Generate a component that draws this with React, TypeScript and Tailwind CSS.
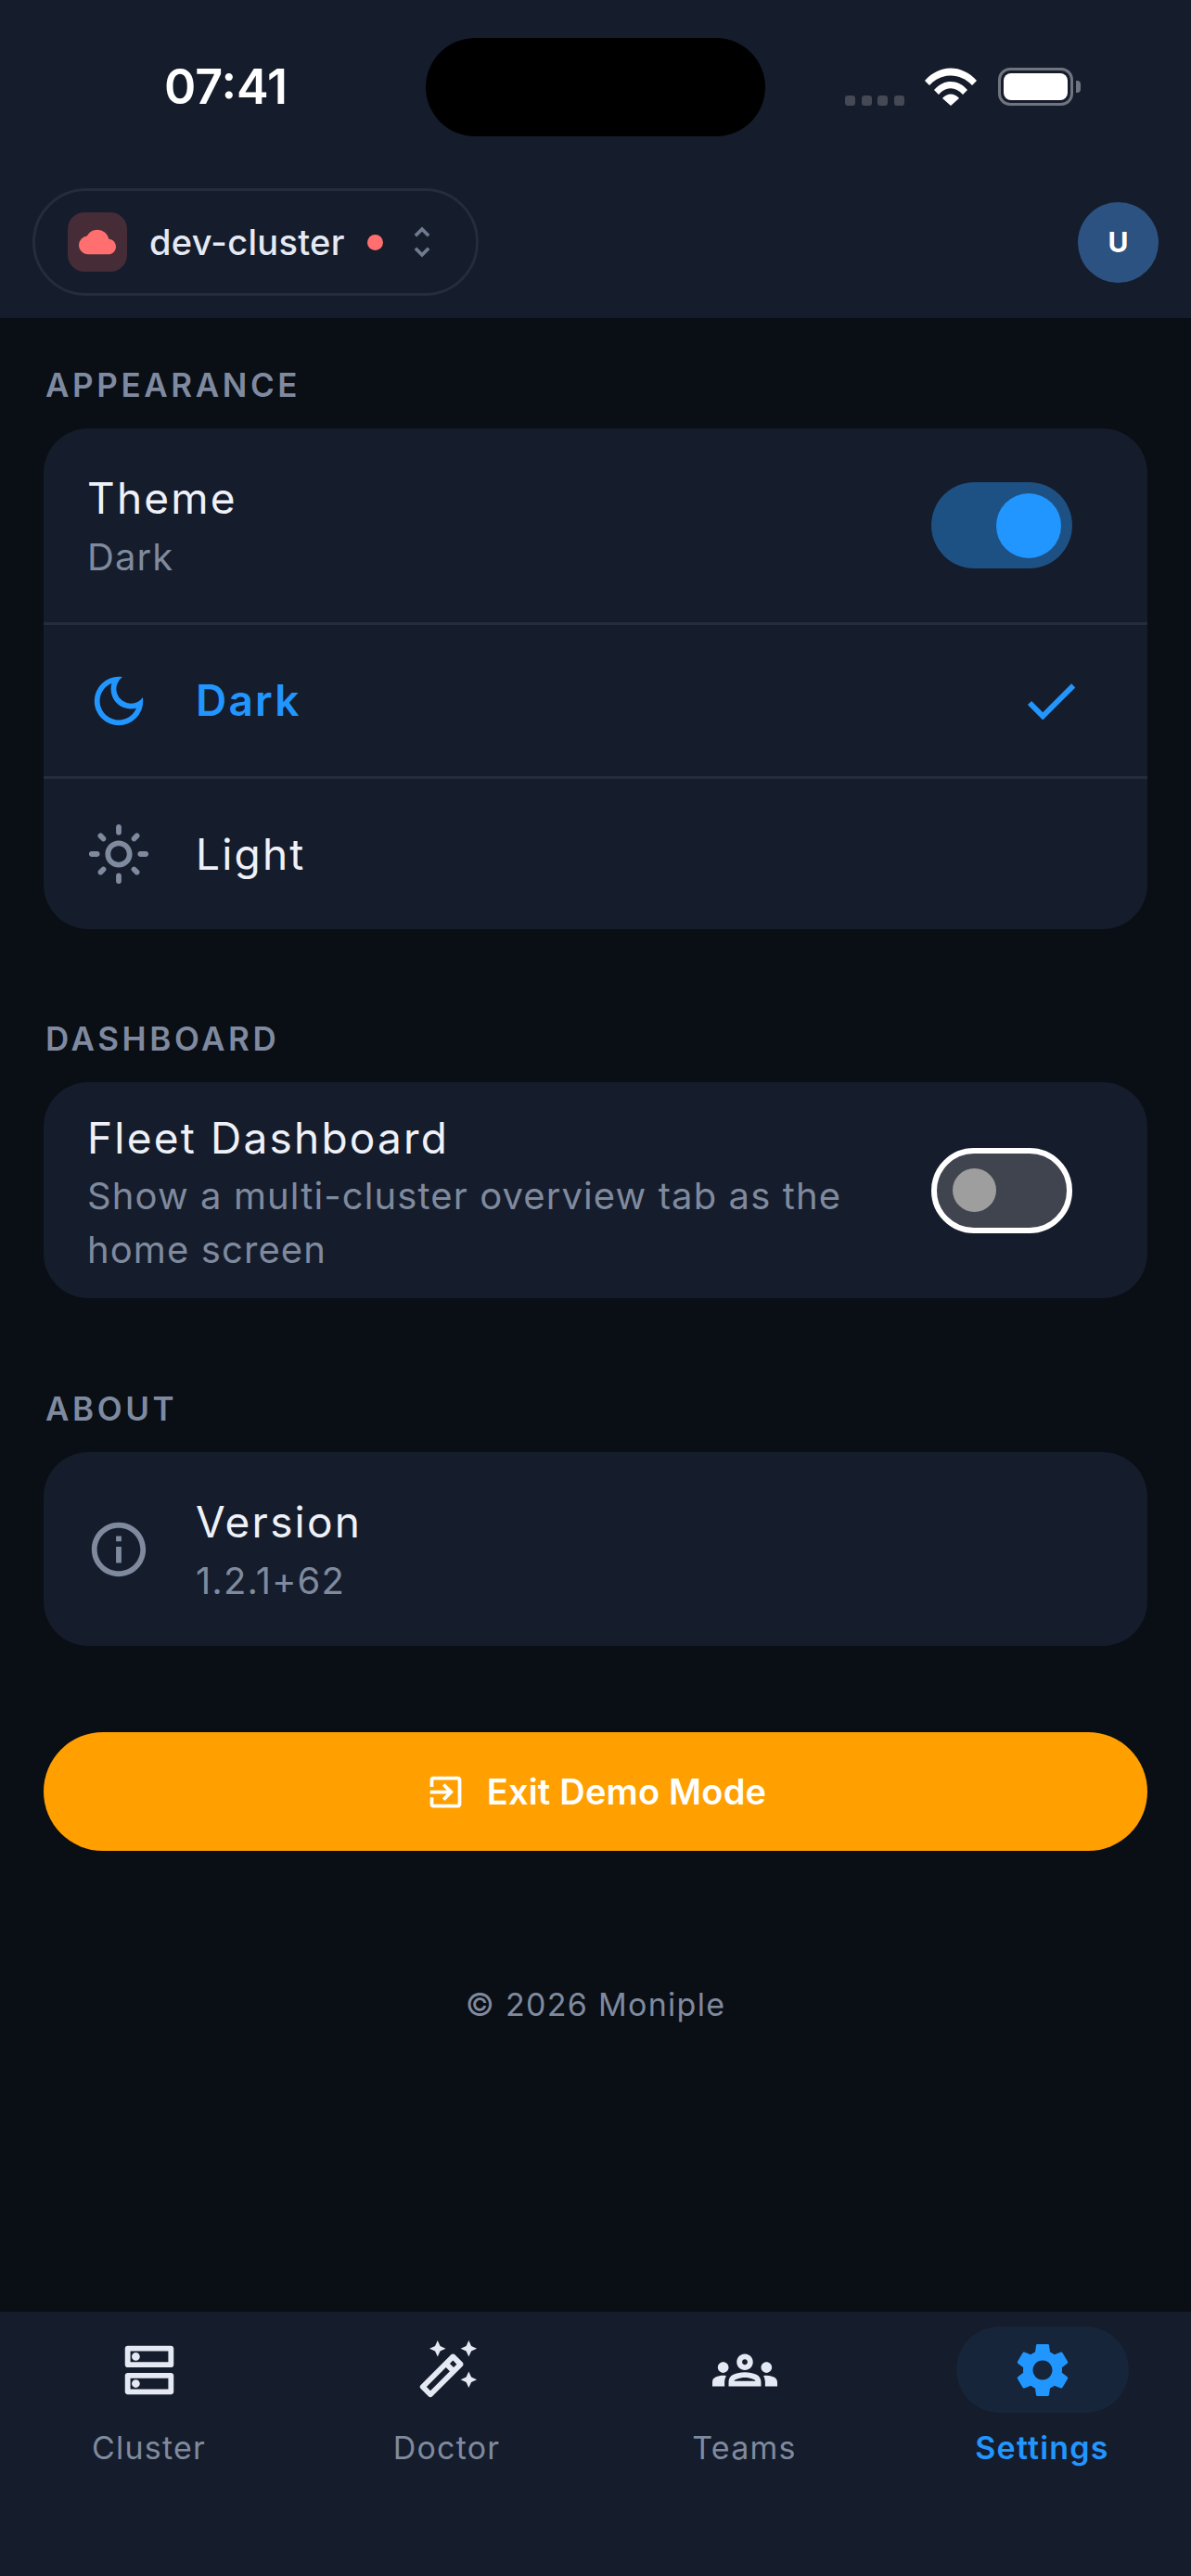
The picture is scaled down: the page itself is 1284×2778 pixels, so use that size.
import React from 'react';
import {
  MdCheck,
  MdCloud,
  MdExitToApp,
  MdInfoOutline,
  MdOutlineAutoFixHigh,
  MdOutlineDarkMode,
  MdOutlineDns,
  MdOutlineGroups,
  MdOutlineLightMode,
  MdSettings,
  MdUnfoldMore,
} from 'react-icons/md';

const SectionLabel = ({ children }: { children: React.ReactNode }) => (
  <div className="pl-[2px] h-[36px] flex items-center text-[35px] font-semibold tracking-[3.6px] text-[#7f8aa0] uppercase">
    {children}
  </div>
);

const Card = ({ children }: { children: React.ReactNode }) => (
  <div className="bg-[#151c2b] rounded-[48px] overflow-hidden mt-[29px]">{children}</div>
);

const navItems = [
  { label: 'Cluster', Icon: MdOutlineDns },
  { label: 'Doctor', Icon: MdOutlineAutoFixHigh },
  { label: 'Teams', Icon: MdOutlineGroups },
  { label: 'Settings', Icon: MdSettings, active: true },
];

export default function App() {
  return (
    <div className="w-[1284px] h-[2778px] flex flex-col bg-[#0a0e15] overflow-hidden font-['Inter',sans-serif]">
      {/* header + status bar */}
      <header className="h-[343px] shrink-0 bg-[#151c2b] flex flex-col">
        <div className="h-[203px] shrink-0 relative">
          <span className="absolute left-[177px] top-[62px] text-[52px] leading-[64px] font-semibold text-white">07:41</span>
          <div className="absolute left-[459px] top-[41px] w-[366px] h-[106px] rounded-full bg-black" />
          <div className="absolute left-[911px] top-[103px] flex gap-[6.5px]">
            <div className="w-[11px] h-[11px] rounded-[3px] bg-[#444955]" />
            <div className="w-[11px] h-[11px] rounded-[3px] bg-[#444955]" />
            <div className="w-[11px] h-[11px] rounded-[3px] bg-[#444955]" />
            <div className="w-[11px] h-[11px] rounded-[3px] bg-[#444955]" />
          </div>
          <svg className="absolute left-[997px] top-[73px]" width="56" height="41" viewBox="0 0 56 41" fill="#fff">
            <path d="M0 14 C16 -4 40 -4 56 14 L51 19 C38 5 18 5 5 19 Z" />
            <path d="M10 24 C20 12 36 12 46 24 L41 29 C33 20 23 20 15 29 Z" />
            <path d="M19 33 C24 27 32 27 37 33 L28 41 Z" />
          </svg>
          <div className="absolute left-[1076px] top-[73px] w-[81px] h-[41px] rounded-[13px] border-[3px] border-[#70747e] p-[3px]">
            <div className="w-full h-full rounded-[8px] bg-white" />
          </div>
          <div className="absolute left-[1160px] top-[87px] w-[5px] h-[13px] rounded-r-[4px] bg-[#70747e]" />
        </div>
        <div className="flex items-start justify-between pl-[35px] pr-[35px]">
          <div className="w-[481px] h-[116px] rounded-full border-[3px] border-[#252c3b] flex items-center pl-[35px]">
            <div className="w-[64px] h-[64px] rounded-[18px] bg-[#452c36] flex items-center justify-center">
              <MdCloud size={40} className="text-[#ff6f70]" />
            </div>
            <span className="ml-[24px] w-[210px] text-[38px] font-medium tracking-[0.3px] text-[#e4e9f4] whitespace-nowrap">dev-cluster</span>
            <div className="ml-[25px] w-[17px] h-[17px] rounded-full bg-[#ff6f70]" />
            <MdUnfoldMore size={44} className="ml-[20px] text-[#717b8f]" />
          </div>
          <div className="mt-[15px] w-[87px] h-[87px] rounded-full bg-[#2c5282] flex items-center justify-center text-[30px] font-bold text-white">
            U
          </div>
        </div>
      </header>

      <main className="flex-1 px-[47px] pt-[54px]">
        <SectionLabel>Appearance</SectionLabel>
        <Card>
          <div className="h-[212px] flex items-center justify-between pl-[47px] pr-[81px] border-b-[3px] border-[#252c3b]">
            <div className="pt-[2px]">
              <div className="text-[46px] leading-[64px] tracking-[2.2px] text-[#eef1f8]">Theme</div>
              <div className="mt-[2px] text-[40px] leading-[60px] tracking-[1.1px] text-[#7f8a9e]">Dark</div>
            </div>
            <div className="w-[152px] h-[93px] rounded-full bg-[#1d5083] flex items-center justify-end pr-[12px]">
              <div className="w-[70px] h-[70px] rounded-full bg-[#2196ff]" />
            </div>
          </div>
          <div className="h-[166px] flex items-center pl-[46px] pr-[69px] border-b-[3px] border-[#252c3b]">
            <MdOutlineDarkMode size={70} className="text-[#2196ff] mr-[48px]" />
            <span className="flex-1 text-[46px] tracking-[2.2px] font-semibold text-[#2196ff]">Dark</span>
            <MdCheck size={70} className="text-[#2196ff]" />
          </div>
          <div className="h-[162px] flex items-center pl-[46px]">
            <MdOutlineLightMode size={70} className="text-[#7f8a9e] mr-[48px]" />
            <span className="text-[46px] tracking-[2.2px] text-[#eef1f8]">Light</span>
          </div>
        </Card>

        <div className="mt-[100px]">
          <SectionLabel>Dashboard</SectionLabel>
        </div>
        <Card>
          <div className="h-[233px] flex items-center justify-between pl-[47px] pr-[81px]">
            <div className="pt-[5px]">
              <div className="text-[46px] leading-[64px] tracking-[2.2px] text-[#eef1f8]">Fleet Dashboard</div>
              <div className="mt-[2px] w-[900px] text-[40px] leading-[58px] tracking-[1.1px] text-[#7f8a9e]">
                Show a multi-cluster overview tab as the home screen
              </div>
            </div>
            <div className="w-[152px] h-[92px] rounded-full bg-[#40444f] border-[6px] border-white flex items-center pl-[17px]">
              <div className="w-[47px] h-[47px] rounded-full bg-[#9e9e9e]" />
            </div>
          </div>
        </Card>

        <div className="mt-[101px]">
          <SectionLabel>About</SectionLabel>
        </div>
        <Card>
          <div className="h-[209px] flex items-center pl-[46px]">
            <MdInfoOutline size={70} className="text-[#7f8a9e] mr-[48px]" />
            <div className="pt-[2px]">
              <div className="text-[46px] leading-[64px] tracking-[2.2px] text-[#eef1f8]">Version</div>
              <div className="mt-[2px] text-[40px] leading-[60px] tracking-[1.1px] text-[#7f8a9e]">1.2.1+62</div>
            </div>
          </div>
        </Card>

        <button className="mt-[93px] w-full h-[128px] rounded-full bg-[#ffa000] flex items-center justify-center text-[38px] tracking-[0.2px] font-semibold text-white">
          <MdExitToApp size={45} className="mr-[22px]" />
          Exit Demo Mode
        </button>

        <div className="mt-[140px] text-center text-[34px] tracking-[1.3px] text-[#7f8a9e]">© 2026 Moniple</div>
      </main>

      {/* bottom tab bar */}
      <nav className="h-[285px] shrink-0 bg-[#151c2b] grid grid-cols-4 pt-[16px]">
        {navItems.map(({ label, Icon, active }) => (
          <div key={label} className="flex flex-col items-center">
            <div className={`w-[186px] h-[93px] rounded-full flex items-center justify-center ${active ? 'bg-[#16253a]' : ''}`}>
              <Icon size={70} className={active ? 'text-[#2196ff]' : 'text-[#e4e9f4]'} />
            </div>
            <span className={`mt-[16px] text-[34px] leading-[44px] tracking-[1.2px] ${active ? 'font-semibold text-[#2196ff]' : 'text-[#7f8a9e]'}`}>
              {label}
            </span>
          </div>
        ))}
      </nav>
    </div>
  );
}
